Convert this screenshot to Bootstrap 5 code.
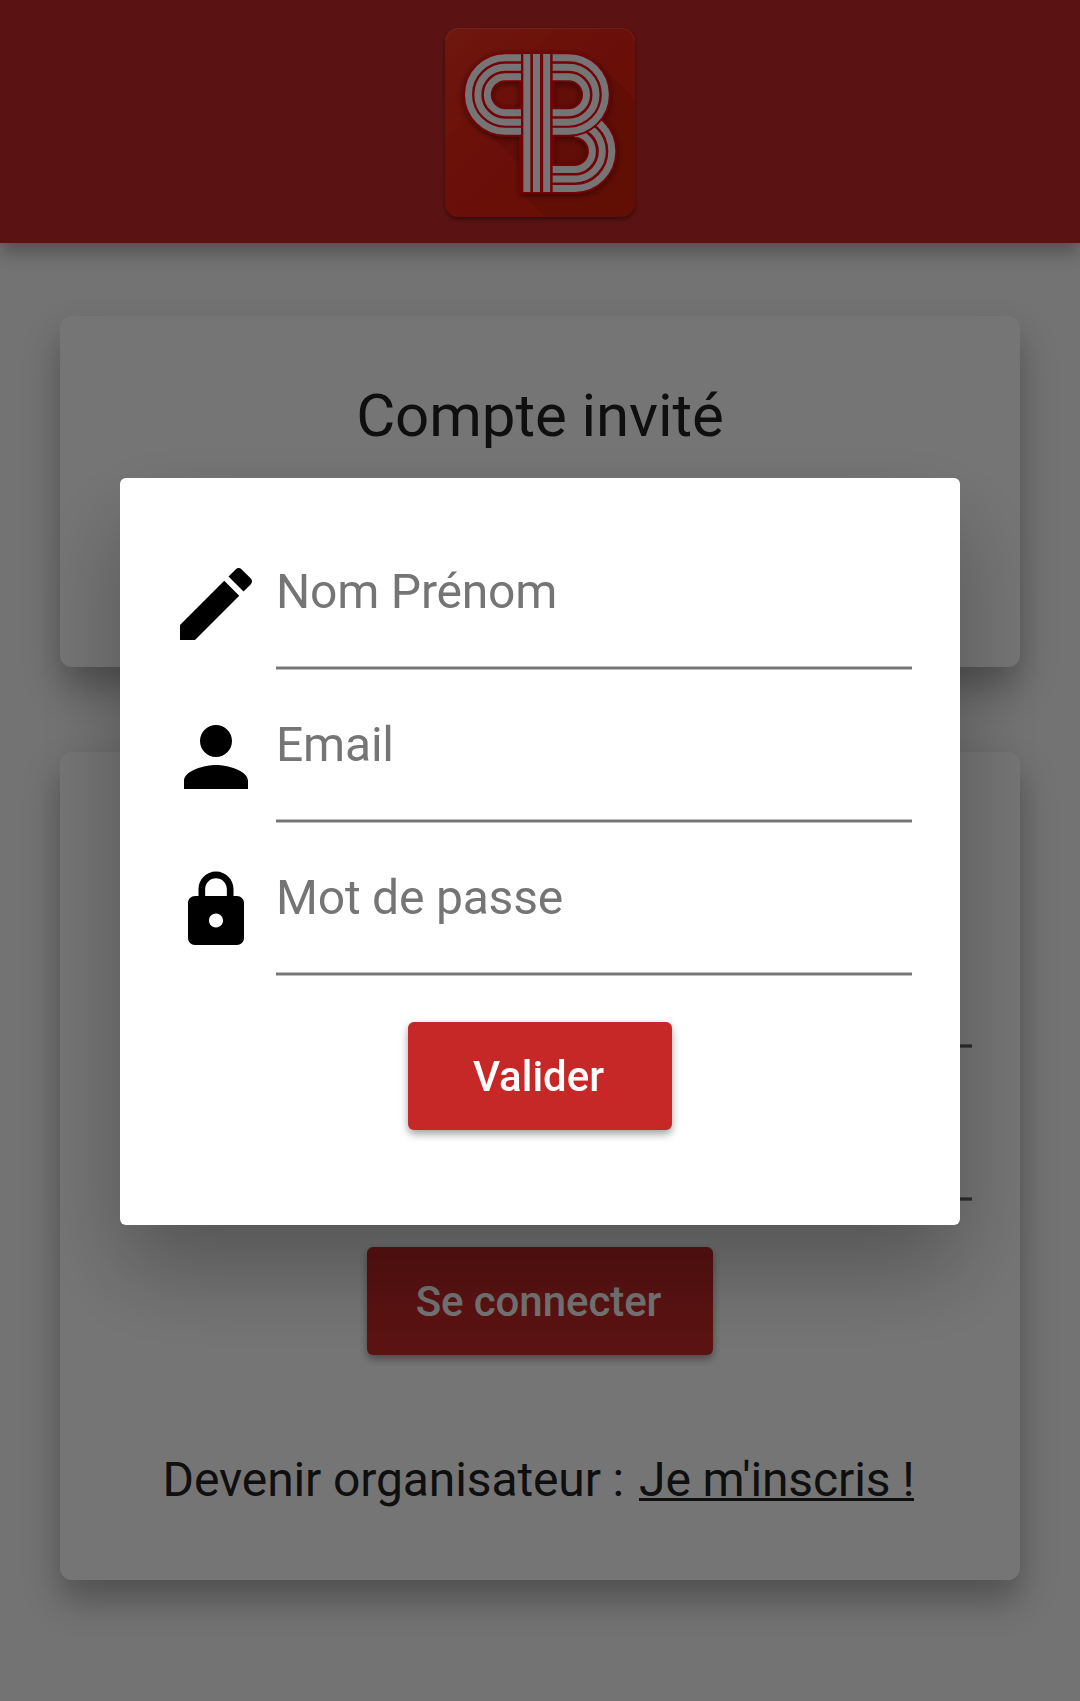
<!DOCTYPE html>
<html lang="fr">
<head>
<meta charset="utf-8">
<meta name="viewport" content="width=device-width, initial-scale=1">
<title>Connexion</title>
<link rel="stylesheet" href="https://cdn.jsdelivr.net/npm/bootstrap@5.3.0/dist/css/bootstrap.min.css">
<style>
body{font-family:Roboto,"Liberation Sans",sans-serif;background:#fafafa;color:#212121;min-height:1701px;overflow:hidden}
.app-header{height:243px;padding-top:10px;background:#c62828;box-shadow:0 9px 18px rgba(0,0,0,.3)}
.app-logo{width:220px;height:230px}
.page-body{padding:73px 60px 0}
.panel{border:0;border-radius:12px;box-shadow:0 20px 36px rgba(0,0,0,.3)}
.panel-guest{height:351px;padding-top:65px;margin-bottom:85px}
.panel-login{height:828px;padding:153px 48px 0}
.panel-title{font-size:60px;line-height:70px;font-weight:400;letter-spacing:-.08px}
.field-row{height:153px;gap:12px}
.field-icon{width:96px;height:96px;margin-top:29px}
.field-icon.lock{width:84px;height:84px;margin:34.5px 6px 0}
.field-input,.field-input:focus{height:143px;padding:36px 0 50px;font-size:48px;line-height:57px;letter-spacing:-.2px;border:0;border-radius:0;box-shadow:none;color:#212121;
 background:linear-gradient(#bdbdbd 1px,#757575 1px,#757575 3px,#bdbdbd 3px) left bottom/100% 4px no-repeat}
.field-input::placeholder{color:#757575;opacity:1}
.panel-login .field-input{background-image:linear-gradient(#9b9b9b 1px,#616161 1px,#616161 3px,#9b9b9b 3px)}
.btn-main{height:108px;margin-top:36px;padding:0 3px 0 0;border:0;border-radius:6px;background:#c62828;color:#fff;font-size:42px;font-weight:500;box-shadow:0 4px 8px rgba(0,0,0,.38)}
.btn-main:hover{background:#c62828;color:#fff}
.btn-valid{width:264px}
.btn-login{width:346px;letter-spacing:-.08px}
.signup{margin-top:96px;font-size:48px;line-height:57px;letter-spacing:-.12px;gap:15px;padding-right:3px}
.signup-link{color:#212121;text-decoration:none;background:linear-gradient(#212121,#212121) left 0 bottom 7px/100% 3px no-repeat}
.scrim{--bs-backdrop-opacity:.54;z-index:1050}
.signup-dialog{width:840px;max-width:840px;margin:478px auto 0}
.signup-box{height:747px;padding:49px 48px 0;border:0;border-radius:6px;box-shadow:0 45px 90px rgba(0,0,0,.28)}
</style>
<script src="https://cdn.jsdelivr.net/npm/bootstrap@5.3.0/dist/js/bootstrap.bundle.min.js"></script>
</head>
<body>
<header class="app-header position-relative d-flex justify-content-center align-items-start">
  <svg class="app-logo" viewBox="0 0 660 690" fill="none">
    <defs>
      <linearGradient id="tile" x1="0" y1="0" x2="1" y2="1"><stop offset="0" stop-color="#ee3322"/><stop offset=".45" stop-color="#ea2312"/><stop offset="1" stop-color="#e52010"/></linearGradient>
      <filter id="drop" x="-20%" y="-20%" width="140%" height="140%"><feDropShadow dx="0" dy="8" stdDeviation="7" flood-opacity=".4"/></filter>
      <filter id="soft" x="-20%" y="-20%" width="140%" height="140%"><feDropShadow dx="0" dy="5" stdDeviation="9" flood-opacity=".5"/></filter>
      <clipPath id="below"><path clip-rule="evenodd" d="M360 270H640V600H360ZM288 254a127 127 0 1 0 254 0a127 127 0 1 0-254 0Z"/></clipPath>
      <g id="upper"><path d="M273 143H226A110.500 110.500 0 0 0 226 364H273M273 171.500H226A82.500 82.500 0 0 0 226 336.500H273M273 200H226A54 54 0 0 0 226 308H273M368 143H415.500A110.500 110.500 0 0 1 415.500 364H368M368 171.500H415.500A82.500 82.500 0 0 1 415.500 336.500H368M368 200H415.500A54 54 0 0 1 415.500 308H368"/></g>
      <path id="stems" d="M290.500 132V546M319.500 132V546M350 132V546"/>
      <path id="lower" d="M434 312.500A111.500 111.500 0 0 1 434 535.500H368M434 341A83 83 0 0 1 434 507H368M433 370A54 54 0 0 1 433 478.500H368"/>
    </defs>
    <rect x="45" y="54" width="570" height="567" rx="42" fill="url(#tile)" filter="url(#drop)"/>
    <path d="M47 92Q51 56 88 55.500H572Q609 56 613 92" stroke="#fff" stroke-opacity=".16" stroke-width="3"/>
    <path d="M145 340L275 470V550L345 621H573Q615 621 615 579V268L505 158Z" fill="#000" fill-opacity=".08"/>
    <g filter="url(#soft)" stroke="#ff000f" stroke-width="32">
      <use href="#lower" clip-path="url(#below)"/>
      <use href="#upper"/>
      <path d="M273 129V551M368 129V551" stroke-width="10"/>
      <path d="M275 339.500H366" stroke-width="424"/>
    </g>
    <g stroke="#fff" stroke-width="21">
      <use href="#lower" clip-path="url(#below)"/>
      <use href="#upper"/><use href="#stems"/>
    </g>
  </svg>
</header>

<main class="page-body">
  <section class="card panel panel-guest text-center">
    <h1 class="panel-title mb-0">Compte invité</h1>
  </section>
  <section class="card panel panel-login">
    <div class="field-row d-flex align-items-start"><div class="field-icon flex-shrink-0"></div><input class="form-control field-input" type="email"></div>
    <div class="field-row d-flex align-items-start"><div class="field-icon flex-shrink-0"></div><input class="form-control field-input" type="password"></div>
    <button class="btn btn-main btn-login align-self-center">Se connecter</button>
    <div class="signup d-flex justify-content-center"><span>Devenir organisateur :</span><a class="signup-link" href="#">Je m'inscris !</a></div>
  </section>
</main>

<div class="modal-backdrop show scrim"></div>
<div class="modal d-block overflow-hidden" tabindex="-1">
  <div class="modal-dialog signup-dialog">
    <form class="modal-content signup-box">
      <div class="field-row d-flex align-items-start">
        <svg class="field-icon flex-shrink-0" viewBox="0 0 24 24"><path d="M3 17.250V21h3.750L17.810 9.940l-3.750-3.750L3 17.250zM20.710 7.040c.39-.39.39-1.020 0-1.410l-2.340-2.340c-.39-.39-1.020-.39-1.410 0l-1.830 1.830 3.750 3.750 1.830-1.830z"/></svg>
        <input class="form-control field-input" type="text" placeholder="Nom Prénom">
      </div>
      <div class="field-row d-flex align-items-start">
        <svg class="field-icon flex-shrink-0" viewBox="0 0 24 24"><path d="M12 12c2.210 0 4-1.790 4-4s-1.790-4-4-4-4 1.790-4 4 1.790 4 4 4zm0 2c-2.670 0-8 1.340-8 4v2h16v-2c0-2.660-5.330-4-8-4z"/></svg>
        <input class="form-control field-input" type="email" placeholder="Email">
      </div>
      <div class="field-row d-flex align-items-start">
        <svg class="field-icon lock flex-shrink-0" viewBox="0 0 24 24"><path d="M18 8h-1V6c0-2.760-2.240-5-5-5S7 3.240 7 6v2H6c-1.100 0-2 .9-2 2v10c0 1.100.9 2 2 2h12c1.100 0 2-.9 2-2V10c0-1.100-.9-2-2-2zm-6 9c-1.100 0-2-.9-2-2s.9-2 2-2 2 .9 2 2-.9 2-2 2zm3.100-9H8.900V6c0-1.710 1.390-3.100 3.100-3.100s3.100 1.390 3.100 3.100v2z"/></svg>
        <input class="form-control field-input" type="password" placeholder="Mot de passe">
      </div>
      <button type="button" class="btn btn-main btn-valid align-self-center">Valider</button>
    </form>
  </div>
</div>
</body>
</html>
